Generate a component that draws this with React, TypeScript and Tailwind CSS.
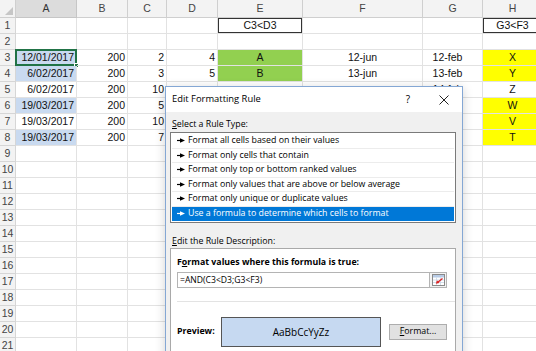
import React from 'react';

type Cell = { v?: string; a?: 'r' | 'c' | 'g'; bg?: 'blue' | 'green' | 'yellow'; box?: boolean; sel?: boolean };

const COLS = ['A', 'B', 'C', 'D', 'E', 'F', 'G', 'H'];

const alignCls = {
  r: 'justify-end pr-[2px]',
  c: 'justify-center',
  g: 'justify-center pr-[10px]',
};

const bgCls = {
  blue: 'bg-[#c9daf0]',
  green: 'bg-[#92d050]',
  yellow: 'bg-[#ffff00]',
};

const r = (v: string, bg?: Cell['bg']): Cell => ({ v, a: 'r', bg });
const c = (v: string, bg?: Cell['bg']): Cell => ({ v, a: 'c', bg });
const g = (v: string): Cell => ({ v, a: 'g' });
const E: Cell = {};

// rows 5-8: columns D-F sit under the dialog, so they stay empty
const DATA: Cell[][] = [
  [E, E, E, E, { v: 'C3<D3', a: 'c', box: true }, E, E, { v: 'G3<F3', a: 'c', box: true }],
  [E, E, E, E, E, E, E, E],
  [{ ...r('12/01/2017', 'blue'), sel: true }, r('200'), r('2'), r('4'), c('A', 'green'), c('12-jun'), g('12-feb'), c('X', 'yellow')],
  [r('6/02/2017', 'blue'), r('200'), r('3'), r('5'), c('B', 'green'), c('13-jun'), g('13-feb'), c('Y', 'yellow')],
  [r('6/02/2017'), r('200'), r('10'), E, E, E, g('14-feb'), c('Z')],
  [r('19/03/2017', 'blue'), r('200'), r('5'), E, E, E, g('15-feb'), c('W', 'yellow')],
  [r('19/03/2017'), r('200'), r('10'), E, E, E, g('16-feb'), c('V', 'yellow')],
  [r('19/03/2017', 'blue'), r('200'), r('7'), E, E, E, g('17-feb'), c('T', 'yellow')],
];

const RULES = [
  'Format all cells based on their values',
  'Format only cells that contain',
  'Format only top or bottom ranked values',
  'Format only values that are above or below average',
  'Format only unique or duplicate values',
  'Use a formula to determine which cells to format',
];

const Arrow = ({ white }: { white?: boolean }) => (
  <svg width="8" height="5" viewBox="0 0 8 5" className="shrink-0">
    <path d="M0 2.5H4" stroke={white ? '#fff' : '#000'} strokeWidth="1.2" />
    <polygon points="3,0.3 8,2.5 3,4.7" fill={white ? '#fff' : '#000'} />
  </svg>
);

const CollapseIcon = () => (
  <svg width="13" height="12" viewBox="0 0 13 12">
    <rect x="0.5" y="0.5" width="12" height="11" fill="#fff" stroke="#8a8a8a" />
    <rect x="1" y="1" width="11" height="2.5" fill="#b7cbe6" />
    <path d="M1 6H12M1 8.5H12M4.5 3.5V11M8.5 3.5V11" stroke="#c9d6e6" strokeWidth="0.8" />
    <path d="M10.5 4.5L5.5 8.5" stroke="#d22" strokeWidth="1.4" />
    <polygon points="3.8,9.8 5,6.2 7.4,9" fill="#d22" />
  </svg>
);

function Dialog() {
  return (
    <div className="absolute left-[165px] top-[86px] w-[298px] h-[290px] border border-[#84a7d4] bg-[#f0f0f0] shadow-[0_2px_10px_rgba(0,0,0,0.18)] font-['Open_Sans',sans-serif] text-[8.8px] text-black">
      <div className="h-[25px] bg-white flex items-center pl-[6px]">
        <span className="text-[9.4px]">Edit Formatting Rule</span>
        <span className="ml-auto w-[30px] text-center text-[10px]">?</span>
        <span className="w-[36px] ml-[3px] flex justify-center">
          <svg width="10" height="10" viewBox="0 0 10 10">
            <path d="M0.5 0.5L9.5 9.5M9.5 0.5L0.5 9.5" stroke="#222" strokeWidth="1" />
          </svg>
        </span>
      </div>
      <div className="pl-[4px] pr-[6px] pt-[6px]">
        <div className="h-[13px] leading-[13px] pl-[2px]">
          <span className="underline">S</span>elect a Rule Type:
        </div>
        <div className="mt-[1px] h-[91px] border border-[#7a7a7a] bg-white px-[1px] pt-[1px]">
          {RULES.map((t, i) => {
            const on = i === RULES.length - 1;
            return (
              <div
                key={t}
                className={
                  on
                    ? 'h-[14.5px] flex items-center gap-[3px] pl-[5px] bg-[#0078d7] text-white'
                    : 'h-[14.5px] flex items-center gap-[3px] pl-[5px] border-b border-[#ececec]'
                }
              >
                <Arrow white={on} />
                <span>{t}</span>
              </div>
            );
          })}
        </div>
        <div className="mt-[12px] h-[13px] leading-[13px] pl-[2px]">
          <span className="underline">E</span>dit the Rule Description:
        </div>
        <div className="h-[120px] border border-[#a9a9a9] bg-white px-[6px] pt-[7px]">
          <div className="h-[13px] leading-[13px] font-bold">
            F<span className="underline">o</span>rmat values where this formula is true:
          </div>
          <div className="mt-[3px] flex h-[16px]">
            <div className="w-[253px] border border-[#b4b4b4] bg-white flex items-center pl-[2px] text-[8.6px]">
              =AND(C3&lt;D3;G3&lt;F3)
            </div>
            <div className="w-[17px] border border-l-0 border-[#b4b4b4] bg-[#f3f3f3] flex items-center justify-center">
              <CollapseIcon />
            </div>
          </div>
          <div className="mt-[13px] -mr-[6px] border-t border-[#e3e3e3]" />
          <div className="mt-[15px] flex items-center">
            <span className="w-[44px] font-bold">Preview:</span>
            <div className="w-[160px] h-[30px] border border-[#555] bg-[#c6d9f1] flex items-center justify-center text-[10px]">
              AaBbCcYyZz
            </div>
            <div className="ml-[8px] w-[58px] h-[16px] border border-[#adadad] bg-[#e1e1e1] flex items-center justify-center">
              <span className="underline">F</span>ormat...
            </div>
          </div>
        </div>
      </div>
    </div>
  );
}

export default function App() {
  const rows = Array.from({ length: 21 }, (_, i) => DATA[i] ?? COLS.map(() => E));
  return (
    <div className="relative w-[536px] h-[351px] overflow-hidden bg-white font-['Liberation_Sans',sans-serif] text-[10.5px] text-[#111]">
      <div className="grid grid-cols-[16px_61px_51px_39px_51px_85px_120px_60px_60px]">
        <div className="h-[18px] bg-[#f3f3f3] border-r border-b border-[#cfcfcf] flex items-end justify-end p-[2px]">
          <svg width="8" height="8" viewBox="0 0 8 8">
            <polygon points="8,0 8,8 0,8" fill="#c6c6c6" />
          </svg>
        </div>
        {COLS.map((h) => (
          <div
            key={h}
            className={
              h === 'A'
                ? 'h-[18px] bg-[#dcdcdc] border-r border-b border-[#c6c6c6] flex items-center justify-center text-[#333]'
                : 'h-[18px] bg-[#f3f3f3] border-r border-b border-[#cfcfcf] flex items-center justify-center text-[#444]'
            }
          >
            {h}
          </div>
        ))}
        {rows.map((row, ri) => (
          <React.Fragment key={ri}>
            <div className="h-4 bg-[#f3f3f3] border-r border-b border-[#d6d6d6] flex items-center justify-center text-[#444]">
              {ri + 1}
            </div>
            {row.map((cell, ci) => (
              <div
                key={ci}
                className={[
                  'relative h-4 flex items-center border-r border-b border-[#e2e2e2] whitespace-nowrap',
                  cell.a ? alignCls[cell.a] : '',
                  cell.bg ? bgCls[cell.bg] : '',
                  cell.box ? 'shadow-[inset_0_0_0_1px_#333]' : '',
                ].join(' ')}
              >
                {cell.v}
                {cell.sel && (
                  <div className="absolute -left-[1px] -top-[1px] -right-[1px] -bottom-[1px] border-2 border-[#217346]">
                    <div className="absolute -right-[4px] -bottom-[4px] w-[5px] h-[5px] bg-[#217346] border border-white" />
                  </div>
                )}
              </div>
            ))}
          </React.Fragment>
        ))}
      </div>
      <Dialog />
    </div>
  );
}
